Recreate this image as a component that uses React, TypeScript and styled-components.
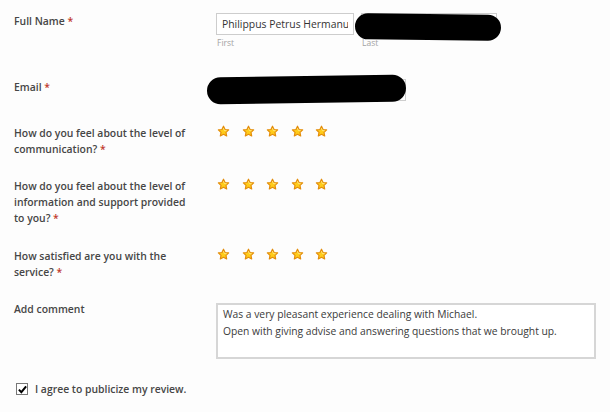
import React from "react";
import styled, { createGlobalStyle } from "styled-components";

const GlobalStyle = createGlobalStyle`
  html, body {
    margin: 0;
    padding: 0;
    background: #fdfdfd;
  }
  body {
    font-family: "Open Sans", "DejaVu Sans", sans-serif;
    color: #444;
  }
`;

const Form = styled.form`
  padding: 13px 14px 0 14px;
  width: 610px;
  box-sizing: border-box;
`;

const Row = styled.div<{ $gap?: number }>`
  display: grid;
  grid-template-columns: 202px 1fr;
  align-items: start;
  margin-bottom: ${(p) => p.$gap ?? 22}px;
`;

const Label = styled.label<{ $top?: number }>`
  display: block;
  width: 178px;
  font-size: 10.4px;
  line-height: 16px;
  font-weight: 600;
  color: #464646;
  padding-top: ${(p) => p.$top ?? 0}px;
`;

const Req = styled.span`
  color: #c0392b;
`;

const Field = styled.div`
  position: relative;
`;

const NameGroup = styled.div`
  display: flex;
  gap: 7px;
`;

const NameCol = styled.div`
  display: flex;
  flex-direction: column;
  gap: 2px;
`;

const TextInput = styled.input<{ $w: number }>`
  width: ${(p) => p.$w}px;
  height: 22px;
  box-sizing: border-box;
  border: 1px solid #cdcdcd;
  background: #fff;
  padding: 0 5px;
  font-family: "Open Sans", sans-serif;
  font-size: 10.4px;
  color: #333;
  outline: none;
`;

const SubLabel = styled.span`
  font-size: 8.5px;
  line-height: 12px;
  color: #a3a3a3;
  padding-left: 1px;
`;

const Scribble = styled.div<{ $l: number; $t: number; $w: number; $h: number; $rot?: number }>`
  position: absolute;
  left: ${(p) => p.$l}px;
  top: ${(p) => p.$t}px;
  width: ${(p) => p.$w}px;
  height: ${(p) => p.$h}px;
  background: #000;
  border-radius: ${(p) => p.$h / 2}px;
  transform: rotate(${(p) => p.$rot ?? 0}deg);
`;

const Stars = styled.div`
  display: flex;
  gap: 11.5px;
  padding-left: 1px;
`;

const TextArea = styled.div`
  width: 380px;
  height: 56px;
  margin-top: 2px;
  box-sizing: border-box;
  border: 2px solid #d6d6d6;
  background: #fff;
  padding: 1px 5px 0;
  font-size: 10.3px;
  line-height: 17px;
  color: #3a3a3a;
`;

const AgreeRow = styled.label`
  display: flex;
  align-items: center;
  gap: 7px;
  padding-left: 2px;
  font-size: 10.4px;
  line-height: 16px;
  font-weight: 600;
  color: #464646;
`;

const Box = styled.span`
  width: 10px;
  height: 10px;
  border: 1px solid #777;
  background: #fff;
  display: inline-flex;
  align-items: center;
  justify-content: center;
`;

const Star = () => (
  <svg width="13" height="13" viewBox="0 0 24 24">
    <path
      d="M12 2.2l2.9 6.1 6.6.8-4.9 4.6 1.3 6.6L12 17.1l-5.9 3.2 1.3-6.6-4.9-4.6 6.6-.8z"
      fill="#ffcc1a"
      stroke="#e38d0b"
      strokeWidth="2.2"
      strokeLinejoin="round"
    />
    <path d="M12 6.5l1.6 3.6 3.6.5" fill="none" stroke="#fff3a8" strokeWidth="1.2" strokeLinecap="round" />
  </svg>
);

const Rating = () => (
  <Stars>
    {[0, 1, 2, 3, 4].map((i) => (
      <Star key={i} />
    ))}
  </Stars>
);

export default function App() {
  return (
    <>
      <GlobalStyle />
      <Form>
        <Row $gap={28}>
          <Label>
            Full Name <Req>*</Req>
          </Label>
          <Field>
            <NameGroup>
              <NameCol>
                <TextInput $w={138} defaultValue="Philippus Petrus Hermanus" readOnly />
                <SubLabel>First</SubLabel>
              </NameCol>
              <NameCol>
                <TextInput $w={136} defaultValue="" readOnly />
                <SubLabel>Last</SubLabel>
              </NameCol>
            </NameGroup>
            <Scribble $l={139} $t={1} $w={146} $h={26} $rot={0.6} />
          </Field>
        </Row>

        <Row $gap={24}>
          <Label $top={2}>
            Email <Req>*</Req>
          </Label>
          <Field>
            <TextInput $w={190} defaultValue="" readOnly />
            <Scribble $l={-9} $t={-1} $w={199} $h={27} $rot={-0.8} />
          </Field>
        </Row>

        <Row $gap={21}>
          <Label>
            How do you feel about the level of communication? <Req>*</Req>
          </Label>
          <Rating />
        </Row>

        <Row>
          <Label>
            How do you feel about the level of information and support provided to you? <Req>*</Req>
          </Label>
          <Rating />
        </Row>

        <Row $gap={21}>
          <Label>
            How satisfied are you with the service? <Req>*</Req>
          </Label>
          <Rating />
        </Row>

        <Row>
          <Label>Add comment</Label>
          <TextArea>
            Was a very pleasant experience dealing with Michael.
            <br />
            Open with giving advise and answering questions that we brought up.
          </TextArea>
        </Row>

        <AgreeRow>
          <Box>
            <svg width="9" height="9" viewBox="0 0 10 10">
              <path d="M1 5.2l2.7 2.8L9 1.5" fill="none" stroke="#000" strokeWidth="2.2" />
            </svg>
          </Box>
          I agree to publicize my review.
        </AgreeRow>
      </Form>
    </>
  );
}
